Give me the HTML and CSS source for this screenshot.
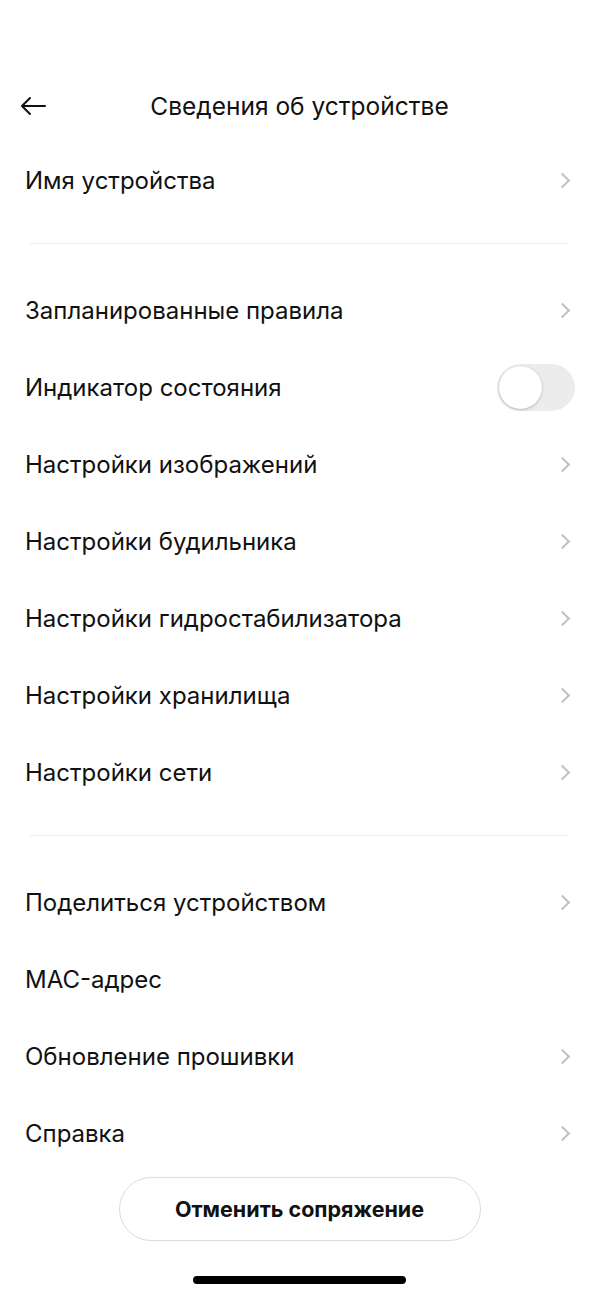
FILE: index.html
```html
<!DOCTYPE html>
<html>
<head>
	<meta charset="utf-8">
	<title>Сведения об устройстве</title>
	<link rel="stylesheet" href="styles.css">
</head>
<body>

<div class="page">
	<div class="header">
		<a class="back" href="javascript:;">
			<svg width="28" height="20" viewBox="0 0 28 20"><path d="M26 10H3M11 2L3 10l8 8" fill="none" stroke="#111" stroke-width="2" stroke-linecap="round" stroke-linejoin="round"/></svg>
		</a>
		<h1 class="title">Сведения об устройстве</h1>
	</div>

	<ul class="list">
		<li class="row"><span>Имя устройства</span><i class="chev"></i></li>
	</ul>
	<div class="divider"></div>

	<ul class="list">
		<li class="row"><span>Запланированные правила</span><i class="chev"></i></li>
		<li class="row"><span>Индикатор состояния</span><span class="toggle"><span class="knob"></span></span></li>
		<li class="row"><span>Настройки изображений</span><i class="chev"></i></li>
		<li class="row"><span>Настройки будильника</span><i class="chev"></i></li>
		<li class="row"><span>Настройки гидростабилизатора</span><i class="chev"></i></li>
		<li class="row"><span>Настройки хранилища</span><i class="chev"></i></li>
		<li class="row"><span>Настройки сети</span><i class="chev"></i></li>
	</ul>
	<div class="divider"></div>

	<ul class="list">
		<li class="row"><span>Поделиться устройством</span><i class="chev"></i></li>
		<li class="row"><span>MAC-адрес</span></li>
		<li class="row"><span>Обновление прошивки</span><i class="chev"></i></li>
		<li class="row"><span>Справка</span><i class="chev"></i></li>
	</ul>

	<div class="footer">
		<a class="unpair" href="javascript:;">Отменить сопряжение</a>
		<div class="home"></div>
	</div>
</div>

</body>
</html>
```

FILE: styles.css
```css
*{
	margin: 0;
	padding: 0;
	list-style: none;
	box-sizing: border-box;
}

body{
	background-color: #fff;
	font-family: "Inter", "Roboto", sans-serif;
	color: #111;
}

.page{
	width: 599px;
	height: 1298px;
	padding-top: 82px;
	display: flex;
	flex-direction: column;
}

.header{
	height: 48px;
	display: flex;
	align-items: center;
	justify-content: center;
	position: relative;
}

.back{
	position: absolute;
	left: 19px;
	top: 14px;
	display: block;
	height: 20px;
}

.title{
	font-size: 24.5px;
	font-weight: 400;
}

.list{
	padding: 0 25px;
}

.header + .list{
	margin-top: 12px;
}

.row{
	height: 77px;
	display: flex;
	align-items: center;
	justify-content: space-between;
	font-size: 24px;
}

.chev{
	width: 11px;
	height: 11px;
	border-top: 2px solid #c2c2c2;
	border-right: 2px solid #c2c2c2;
	transform: rotate(45deg);
	margin-right: 6px;
}

.toggle{
	width: 78px;
	height: 47px;
	border-radius: 24px;
	background-color: #ececec;
	padding: 2px;
	margin-right: -1px;
	display: flex;
	align-items: center;
}

.knob{
	width: 43px;
	height: 43px;
	border-radius: 50%;
	background-color: #fff;
	box-shadow: 0 1px 3px rgba(0,0,0,0.2), 0 0 0 0.5px rgba(0,0,0,0.06);
}

.divider{
	height: 1px;
	background-color: #ededed;
	margin: 24px 31px 28px 30px;
}

.footer{
	display: flex;
	flex-direction: column;
	align-items: center;
	padding-top: 5px;
}

.unpair{
	width: 362px;
	height: 64px;
	border: 1px solid #dcdcdc;
	border-radius: 32px;
	display: flex;
	align-items: center;
	justify-content: center;
	font-size: 21.5px;
	font-weight: 700;
	color: #111;
	text-decoration: none;
}

.home{
	width: 213px;
	height: 8px;
	border-radius: 4px;
	background-color: #000;
	margin-top: 35px;
}
```
